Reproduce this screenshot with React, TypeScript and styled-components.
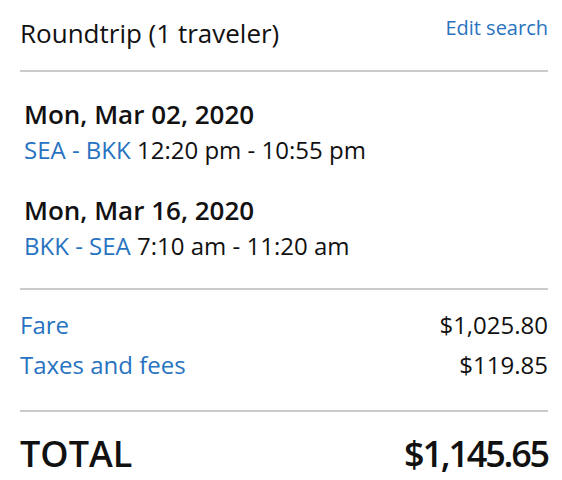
import React from 'react';
import styled, { createGlobalStyle } from 'styled-components';

const GlobalStyle = createGlobalStyle`
  html, body {
    margin: 0;
    padding: 0;
    background: #ffffff;
  }
  body {
    font-family: 'Open Sans', 'Liberation Sans', Arial, sans-serif;
    color: #111111;
  }
`;

const Summary = styled.div`
  width: 528px;
  padding: 0 14px 0 20px;
`;

const Header = styled.div`
  display: flex;
  justify-content: space-between;
  align-items: flex-start;
  padding: 15px 0 19px;
  border-bottom: 2px solid #cbcbcb;
`;

const Title = styled.div`
  font-size: 26px;
  line-height: 36px;
`;

const EditLink = styled.a`
  font-size: 20px;
  line-height: 26px;
  color: #2873c1;
  text-decoration: none;
  cursor: pointer;
`;

const Flights = styled.div`
  display: flex;
  flex-direction: column;
  gap: 24px;
  padding: 24px 0 24px 4px;
  border-bottom: 2px solid #cbcbcb;
`;

const Segment = styled.div`
  display: flex;
  flex-direction: column;
`;

const SegmentDate = styled.div`
  font-size: 26px;
  font-weight: 600;
  line-height: 36px;
`;

const SegmentTimes = styled.div`
  font-size: 24px;
  line-height: 36px;
`;

const Route = styled.span`
  color: #2873c1;
`;

const Charges = styled.div`
  padding: 15px 0 25px;
  border-bottom: 2px solid #cbcbcb;
`;

const ChargeRow = styled.div`
  display: flex;
  justify-content: space-between;
  font-size: 24px;
  line-height: 40px;
`;

const ChargeLabel = styled.span`
  color: #2873c1;
`;

const TotalRow = styled.div`
  display: flex;
  justify-content: space-between;
  padding-top: 18px;
  font-size: 36px;
  font-weight: 600;
  line-height: 48px;
`;

const TotalAmount = styled.span`
  letter-spacing: -2.2px;
`;

const segments = [
  { date: 'Mon, Mar 02, 2020', route: 'SEA - BKK', times: '12:20 pm - 10:55 pm' },
  { date: 'Mon, Mar 16, 2020', route: 'BKK - SEA', times: '7:10 am - 11:20 am' },
];

const charges = [
  { label: 'Fare', amount: '$1,025.80' },
  { label: 'Taxes and fees', amount: '$119.85' },
];

const App: React.FC = () => {
  return (
    <>
      <GlobalStyle />
      <Summary>
        <Header>
          <Title>Roundtrip (1 traveler)</Title>
          <EditLink>Edit search</EditLink>
        </Header>
        <Flights>
          {segments.map((s) => (
            <Segment key={s.date}>
              <SegmentDate>{s.date}</SegmentDate>
              <SegmentTimes>
                <Route>{s.route}</Route> {s.times}
              </SegmentTimes>
            </Segment>
          ))}
        </Flights>
        <Charges>
          {charges.map((c) => (
            <ChargeRow key={c.label}>
              <ChargeLabel>{c.label}</ChargeLabel>
              <span>{c.amount}</span>
            </ChargeRow>
          ))}
        </Charges>
        <TotalRow>
          <span>TOTAL</span>
          <TotalAmount>$1,145.65</TotalAmount>
        </TotalRow>
      </Summary>
    </>
  );
};

export default App;
